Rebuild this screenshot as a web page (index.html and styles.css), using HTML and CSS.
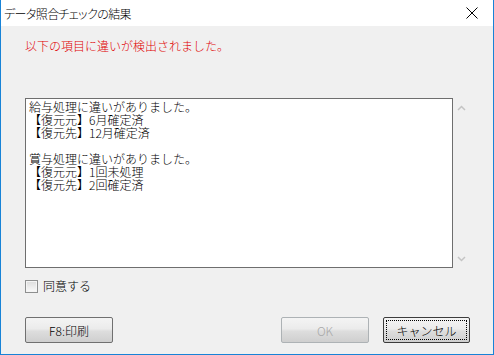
FILE: index.html
```html
<!DOCTYPE html>
<html lang="ja">
<head>
    <meta charset="UTF-8">
    <title>データ照合チェックの結果</title>
    <link rel="stylesheet" href="styles.css">
</head>
<body>
    <div class="window">
        <div class="title-bar">
            <span class="title">データ照合チェックの結果</span>
            <svg class="close" width="12" height="12" viewBox="0 0 12 12">
                <path d="M0.5 0.5 L11.5 11.5 M11.5 0.5 L0.5 11.5" stroke="#000" stroke-width="1" fill="none"/>
            </svg>
        </div>
        <div class="content">
            <p class="alert">以下の項目に違いが検出されました。</p>
            <div class="result-row">
                <div class="result-box">給与処理に違いがありました。
【復元元】6月確定済
【復元先】12月確定済

賞与処理に違いがありました。
【復元元】1回未処理
【復元先】2回確定済</div>
                <div class="scrollbar">
                    <svg width="9" height="6" viewBox="0 0 9 6"><path d="M1 5 L4.5 1.5 L8 5" stroke="#c4c4c4" stroke-width="1.5" fill="none"/></svg>
                    <svg width="9" height="6" viewBox="0 0 9 6"><path d="M1 1 L4.5 4.5 L8 1" stroke="#c4c4c4" stroke-width="1.5" fill="none"/></svg>
                </div>
            </div>
            <label class="agree">
                <span class="checkbox"></span>
                同意する
            </label>
            <div class="buttons">
                <button class="btn">F8:印刷</button>
                <div class="right-buttons">
                    <button class="btn disabled">OK</button>
                    <button class="btn focused"><span>キャンセル</span></button>
                </div>
            </div>
        </div>
    </div>
</body>
</html>
```

FILE: styles.css
```css
* {
    margin: 0;
    padding: 0;
    box-sizing: border-box;
    font-family: "Noto Sans CJK JP", "DejaVu Sans", sans-serif;
    font-weight: 300;
}

body {
    width: 494px;
    height: 355px;
    overflow: hidden;
    background-color: #f0f0f0;
}

.window {
    width: 494px;
    height: 355px;
    display: flex;
    flex-direction: column;
    border: 1px solid #1883d7;
    border-top: none;
    background-color: #f0f0f0;
}

/* Title bar */
.title-bar {
    height: 26px;
    background-color: #fff;
    display: flex;
    align-items: center;
    justify-content: space-between;
    padding: 0 15px 0 3px;
}

.title {
    font-size: 12px;
    color: #000;
    font-feature-settings: "palt";
    letter-spacing: -0.6px;
}

/* Content */
.content {
    flex: 1;
    display: flex;
    flex-direction: column;
    padding: 0 23px 0 24px;
}

.alert {
    margin-top: 13px;
    font-size: 12px;
    line-height: 14px;
    color: #e00000;
}

.result-row {
    margin-top: 45px;
    display: flex;
    height: 170px;
}

.result-box {
    width: 428px;
    border: 1px solid #6e6e6e;
    background-color: #fff;
    padding: 1px 3px;
    font-size: 12px;
    line-height: 13px;
    color: #000;
    white-space: pre;
}

.scrollbar {
    flex: 1;
    display: flex;
    flex-direction: column;
    justify-content: space-between;
    align-items: center;
    padding: 7px 0 6px;
}

.agree {
    margin-top: 11px;
    display: flex;
    align-items: center;
    gap: 5px;
    font-size: 12px;
    line-height: 14px;
    color: #000;
}

.checkbox {
    width: 13px;
    height: 13px;
    border: 1px solid #8e8f8f;
    background: linear-gradient(#dcdcdc, #fafafa);
    box-shadow: inset 0 0 0 1px #f4f4f4;
}

/* Buttons */
.buttons {
    margin-top: 24px;
    display: flex;
    justify-content: space-between;
}

.right-buttons {
    display: flex;
    gap: 14px;
}

.btn {
    width: 88px;
    height: 26px;
    border: 1px solid #707070;
    border-radius: 2px;
    background: linear-gradient(#f4f4f4 0%, #ebebeb 45%, #dddddd 55%, #cfcfcf 100%);
    font-size: 12px;
    color: #000;
    display: flex;
    align-items: center;
    justify-content: center;
}

.btn.disabled {
    border-color: #adb2b5;
    color: #a8a8a8;
}

.btn.focused {
    width: 87px;
    border-color: #3c3c3c;
    padding: 2px;
}

.btn.focused span {
    flex: 1;
    align-self: stretch;
    display: flex;
    align-items: center;
    justify-content: center;
    border: 1px dotted #000;
}
```
